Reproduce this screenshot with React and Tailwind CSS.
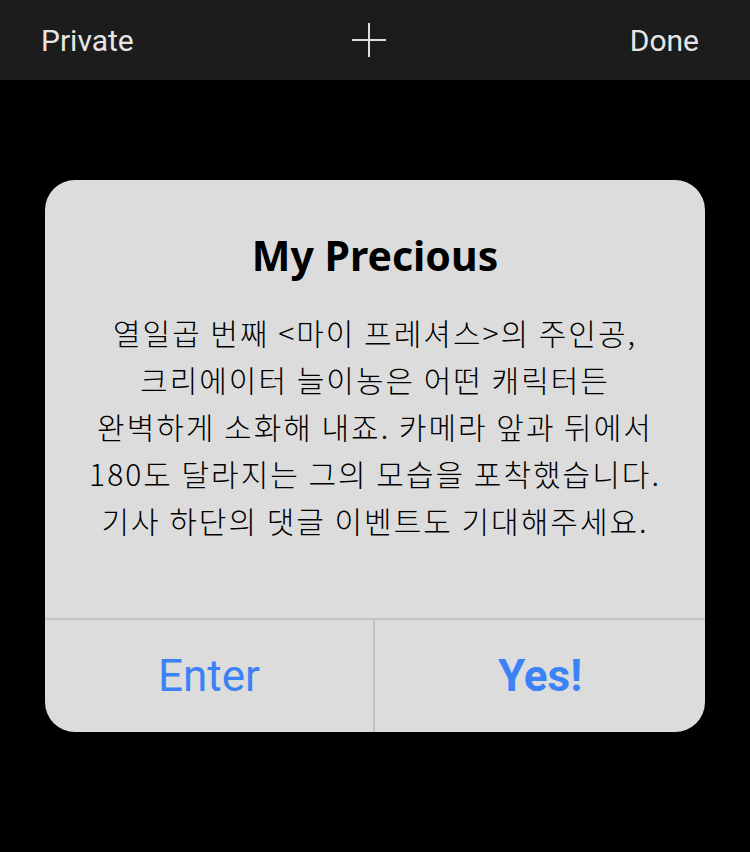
import React from 'react';

const BODY = [
  '열일곱 번째 <마이 프레셔스>의 주인공,',
  '크리에이터 늘이농은 어떤 캐릭터든',
  '완벽하게 소화해 내죠. 카메라 앞과 뒤에서',
  '180도 달라지는 그의 모습을 포착했습니다.',
  '기사 하단의 댓글 이벤트도 기대해주세요.',
];

function PlusIcon() {
  return (
    <svg width="34" height="34" viewBox="0 0 34 34" fill="none">
      <path d="M17 0V34M0 17H34" stroke="#e0e0e0" strokeWidth="2" />
    </svg>
  );
}

export default function App() {
  return (
    <div
      className="w-[750px] h-[852px] bg-black flex flex-col"
      style={{ fontFamily: 'Roboto, "Noto Sans CJK KR", sans-serif' }}
    >
      {/* Top bar */}
      <div className="h-[80px] bg-[#1c1c1c] flex items-center justify-between pl-[41px] pr-[51px] text-[#e6e6e6] text-[30px]">
        <span>Private</span>
        <span className="mr-[25px]"><PlusIcon /></span>
        <span>Done</span>
      </div>

      {/* Alert */}
      <div className="mt-[100px] mx-[45px] h-[552px] bg-[#dcdcdc] rounded-[30px] flex flex-col overflow-hidden">
        <div
          className="flex-1 flex flex-col items-center pt-[52px] text-black"
          style={{ fontFamily: '"Noto Sans", "Noto Sans CJK KR", sans-serif' }}
        >
          <h1 className="text-[41px] font-bold leading-[46px]">My Precious</h1>
          <div
            className="mt-[31px] text-[30px] font-light tracking-[2px] leading-[47px] text-center"
            style={{ fontFamily: '"Noto Sans CJK KR", sans-serif' }}
          >
            {BODY.map((line) => (
              <div key={line}>{line}</div>
            ))}
          </div>
        </div>
        <div className="h-[114px] border-t-2 border-[#c4c4c4] grid grid-cols-2 text-[#3b82f6] text-[44px]">
          <button className="flex items-center justify-center border-r-2 border-[#c4c4c4]">Enter</button>
          <button className="flex items-center justify-center font-bold">Yes!</button>
        </div>
      </div>
    </div>
  );
}
